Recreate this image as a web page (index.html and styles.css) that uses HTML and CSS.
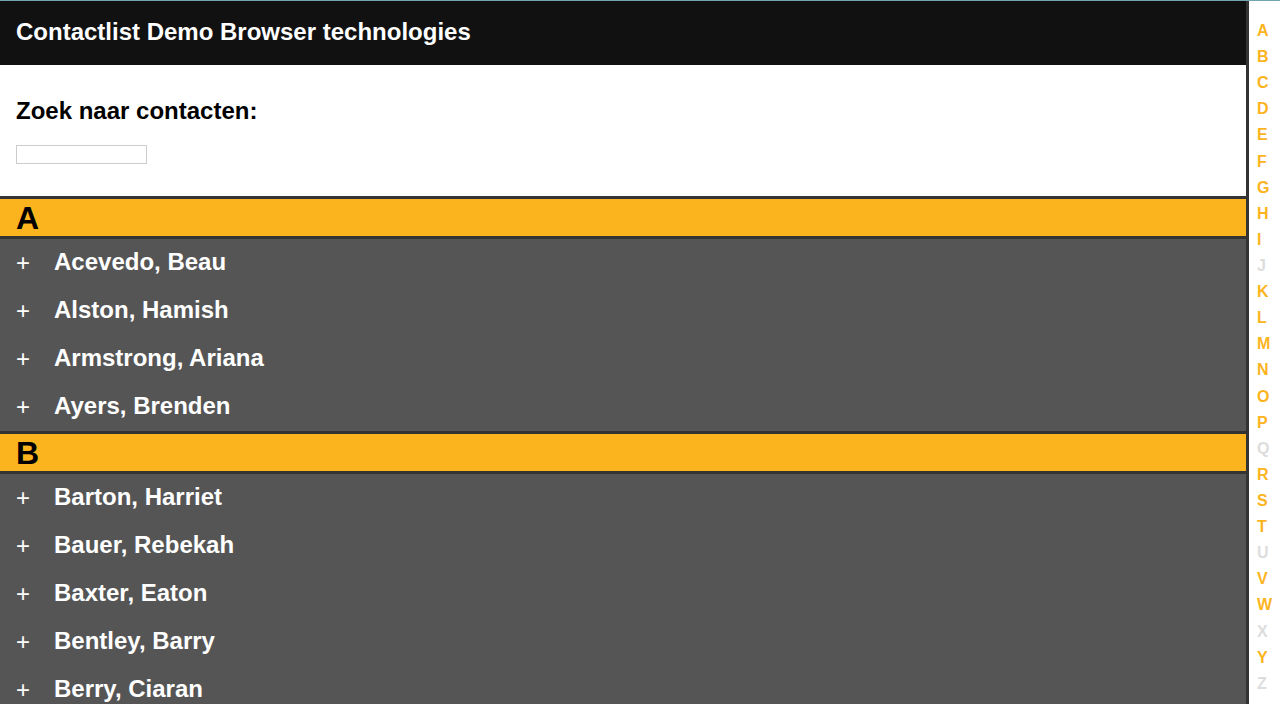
FILE: index.html
```
<!DOCTYPE html>
<html lang="nl">
<head>
<meta charset="utf-8">
<title>Contactlist Demo Browser technologies</title>
<link rel="stylesheet" href="styles.css">
</head>
<body>
<div class="page">
<main class="main">
<header class="header"><h1 class="title">Contactlist Demo Browser technologies</h1></header>
<form class="search">
<label class="search-label" for="search">Zoek naar contacten:</label>
<input class="search-input" id="search" type="text">
</form>
<section class="group" id="A">
<h2 class="letter">A</h2>
<ul class="contacts">
<li><button class="contact" type="button"><span class="plus">+</span>Acevedo, Beau</button></li>
<li><button class="contact" type="button"><span class="plus">+</span>Alston, Hamish</button></li>
<li><button class="contact" type="button"><span class="plus">+</span>Armstrong, Ariana</button></li>
<li><button class="contact" type="button"><span class="plus">+</span>Ayers, Brenden</button></li>
</ul>
</section>
<section class="group" id="B">
<h2 class="letter">B</h2>
<ul class="contacts">
<li><button class="contact" type="button"><span class="plus">+</span>Barton, Harriet</button></li>
<li><button class="contact" type="button"><span class="plus">+</span>Bauer, Rebekah</button></li>
<li><button class="contact" type="button"><span class="plus">+</span>Baxter, Eaton</button></li>
<li><button class="contact" type="button"><span class="plus">+</span>Bentley, Barry</button></li>
<li><button class="contact" type="button"><span class="plus">+</span>Berry, Ciaran</button></li>
</ul>
</section>
</main>
<nav class="index" aria-label="Alfabet">
<a href="#A">A</a>
<a href="#B">B</a>
<a href="#C">C</a>
<a href="#D">D</a>
<a href="#E">E</a>
<a href="#F">F</a>
<a href="#G">G</a>
<a href="#H">H</a>
<a href="#I">I</a>
<span>J</span>
<a href="#K">K</a>
<a href="#L">L</a>
<a href="#M">M</a>
<a href="#N">N</a>
<a href="#O">O</a>
<a href="#P">P</a>
<span>Q</span>
<a href="#R">R</a>
<a href="#S">S</a>
<a href="#T">T</a>
<span>U</span>
<a href="#V">V</a>
<a href="#W">W</a>
<span>X</span>
<a href="#Y">Y</a>
<span>Z</span>
</nav>
</div>
</body>
</html>
```

FILE: styles.css
```
* { box-sizing: border-box; }
body {
  margin: 0;
  font-family: "Liberation Sans", Helvetica, Arial, sans-serif;
  font-weight: bold;
  color: #000;
  background: #fff;
}
.page {
  display: flex;
  height: 100vh;
  border-top: 1px solid #72a5ae;
}
.main {
  flex: 1;
  overflow-y: auto;
  scrollbar-width: none;
}
.header {
  padding: 15px 16px 17px;
  background: #111;
  color: #fff;
}
.title {
  margin: 0;
  font-size: 24px;
  line-height: 32px;
}
.search {
  display: flex;
  flex-direction: column;
  align-items: flex-start;
  gap: 16px;
  padding: 28px 16px 32px;
}
.search-label {
  font-size: 24px;
  line-height: 36px;
}
.search-input {
  width: 131px;
  height: 19px;
  padding: 0 2px;
  border: 1px solid #ccc;
  background: #fff;
}
.letter {
  margin: 0;
  padding: 2px 16px 0;
  border-top: 3px solid #333;
  border-bottom: 3px solid #333;
  background: #fbb41e;
  font-size: 32px;
  line-height: 35px;
}
.contacts {
  margin: 0;
  padding: 0;
  list-style: none;
  background: #555;
}
.contact {
  display: flex;
  align-items: flex-start;
  width: 100%;
  padding: 7px 16px;
  border: 0;
  background: none;
  color: #fff;
  font: bold 24px/32px "Liberation Sans", Helvetica, Arial, sans-serif;
  text-align: left;
}
.plus {
  width: 38px;
  font-weight: normal;
  line-height: 34px;
}
.index {
  display: flex;
  flex-direction: column;
  justify-content: space-between;
  width: 34px;
  padding: 17px 0 7px 8px;
  border-left: 3px solid #333;
  font-size: 16px;
  line-height: 26px;
  color: #ddd;
}
.index a {
  color: #fbb41e;
  text-decoration: none;
}
```
